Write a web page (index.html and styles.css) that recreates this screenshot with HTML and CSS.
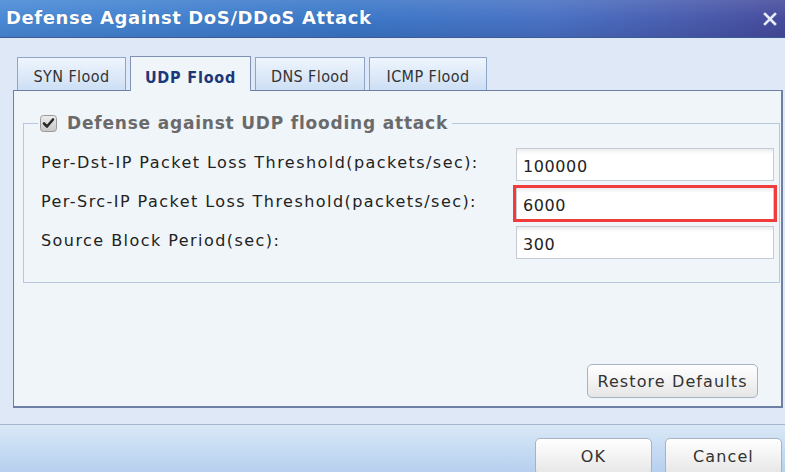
FILE: index.html
```html
<!DOCTYPE html>
<html>
<head>
<meta charset="utf-8">
<link rel="stylesheet" href="styles.css">
</head>
<body>
<div class="dialog">
  <div class="titlebar">
    <span class="title">Defense Against DoS/DDoS Attack</span>
    <svg class="close" width="14" height="14" viewBox="0 0 14 14"><path d="M2 2 L12 12 M12 2 L2 12" stroke="#e8ecf4" stroke-width="2.6" stroke-linecap="square"/></svg>
  </div>
  <div class="content">
    <div class="tabs">
      <div class="tab t-syn">SYN Flood</div>
      <div class="tab active t-udp">UDP Flood</div>
      <div class="tab t-dns">DNS Flood</div>
      <div class="tab t-icmp">ICMP Flood</div>
    </div>
    <div class="panel">
      <fieldset class="group">
        <legend class="legend">
          <svg class="check" width="17" height="17" viewBox="0 0 17 17">
            <defs><linearGradient id="cb" x1="0" y1="0" x2="0" y2="1"><stop offset="0" stop-color="#eeeeee"/><stop offset="1" stop-color="#c6c6c6"/></linearGradient></defs>
            <rect x="0.5" y="0.5" width="16" height="16" rx="3" fill="url(#cb)" stroke="#9a9a9a"/>
            <path d="M4 8.5 L7 11.5 L13 4.5" fill="none" stroke="#2a2a2a" stroke-width="2.6" stroke-linecap="round" stroke-linejoin="round"/>
          </svg>
          <span>Defense against UDP flooding attack</span>
        </legend>
        <div class="rows">
          <label class="lbl">Per-Dst-IP Packet Loss Threshold(packets/sec):</label>
          <div class="field"><input class="inp" type="text" value="100000"></div>
          <label class="lbl">Per-Src-IP Packet Loss Threshold(packets/sec):</label>
          <div class="field highlighted"><input class="inp" type="text" value="6000"></div>
          <label class="lbl">Source Block Period(sec):</label>
          <div class="field"><input class="inp" type="text" value="300"></div>
        </div>
      </fieldset>
      <div class="panel-actions">
        <button class="btn restore">Restore Defaults</button>
      </div>
    </div>
  </div>
  <div class="footer">
    <button class="btn fbtn">OK</button>
    <button class="btn fbtn">Cancel</button>
  </div>
</div>
</body>
</html>
```

FILE: styles.css
```css
* { box-sizing: border-box; }
html, body { margin: 0; padding: 0; }
body {
  width: 785px;
  height: 472px;
  overflow: hidden;
  font-family: "DejaVu Sans", Verdana, sans-serif;
  background: #dfe8f6;
}
.dialog {
  width: 785px;
  height: 472px;
  display: flex;
  flex-direction: column;
  overflow: hidden;
}
.titlebar {
  height: 38px;
  flex: none;
  display: flex;
  align-items: center;
  justify-content: space-between;
  padding: 0 8px 2px 6px;
  background:
    linear-gradient(to bottom, rgba(255,255,255,0.10) 0%, rgba(255,255,255,0) 50%, rgba(0,0,40,0.10) 100%),
    linear-gradient(to right, #4a8ad6 0%, #3c78c8 45%, #4a72c4 70%, #4a5cae 88%, #464c9c 100%);
  border-bottom: 1px solid #3a5a98;
}
.title {
  color: #ffffff;
  font-weight: bold;
  font-size: 18px;
  letter-spacing: 0.6px;
  text-shadow: 0 0 1px rgba(0,0,40,0.3);
}
.close { display: block; margin-top: 2px; }
.content {
  flex: none;
  padding: 18px 2px 0 13px;
  height: 386px;
  display: flex;
  flex-direction: column;
}
.tabs {
  display: flex;
  align-items: flex-end;
  padding-left: 4px;
  height: 34px;
  flex: none;
  position: relative;
  z-index: 1;
}
.tab {
  height: 33px;
  border: 1px solid #8ea4c8;
  border-bottom: none;
  background: linear-gradient(to bottom, #eef5fd 0%, #dbe8f8 60%, #cddff5 100%);
  font-family: "DejaVu Sans Condensed", "DejaVu Sans", sans-serif;
  font-size: 16px;
  letter-spacing: 0.4px;
  color: #333;
  display: flex;
  align-items: center;
  justify-content: center;
  padding-top: 5px;
  margin-right: 4px;
}
.t-syn { width: 109px; }
.t-udp { width: 121px; }
.t-dns { width: 110px; }
.t-icmp { width: 118px; }
.tab.active {
  height: 35px;
  background: #f0f5fa;
  color: #1c3878;
  font-weight: bold;
  letter-spacing: 0.8px;
  border-color: #7f92b6;
  margin-bottom: -1px;
  padding-top: 6px;
}
.panel {
  flex: none;
  height: 318px;
  border: 1px solid #6d80a4;
  border-right-width: 2px;
  border-bottom-width: 2px;
  background: #f0f5fa;
  padding: 22px 1px 8px 9px;
  display: flex;
  flex-direction: column;
  justify-content: space-between;
}
.group {
  margin: 0;
  border: 1px solid #b8c8de;
  padding: 15px 5px 23px 17px;
  min-width: 0;
}
.legend {
  margin-left: -3px;
  padding: 0 4px 0 2px;
  display: flex;
  align-items: center;
  gap: 10px;
  font-weight: bold;
  font-size: 17px;
  color: #6a6a6a;
  letter-spacing: 0.8px;
}
.check { display: block; }
.rows {
  display: grid;
  grid-template-columns: 1fr 258px;
  row-gap: 6px;
  align-items: center;
}
.lbl {
  font-size: 16px;
  color: #222;
  letter-spacing: 1.45px;
  padding-bottom: 5px;
  white-space: nowrap;
}
.field { position: relative; height: 33px; }
.inp {
  width: 258px;
  height: 33px;
  margin: 0;
  border: 1px solid #c6cbd4;
  background: linear-gradient(to bottom, #ececec 0px, #ffffff 5px, #ffffff 100%);
  font-family: "DejaVu Sans", Verdana, sans-serif;
  font-size: 16px;
  letter-spacing: 0.6px;
  color: #222;
  padding: 3px 6px 0 6px;
  outline: none;
}
.highlighted::after {
  content: "";
  position: absolute;
  left: -3px; top: -2px; right: -3px; bottom: -2px;
  border: 3px solid #f03c3c;
  pointer-events: none;
}
.panel-actions {
  display: flex;
  justify-content: flex-end;
  padding-right: 22px;
}
.btn {
  font-family: "DejaVu Sans", Verdana, sans-serif;
  font-size: 16px;
  color: #333;
  border: 1px solid #a9b2bf;
  border-radius: 5px;
  background: linear-gradient(to bottom, #ffffff 0%, #f4f4f4 45%, #e6e6e6 100%);
  letter-spacing: 1.1px;
}
.restore {
  width: 171px;
  height: 34px;
  padding: 0;
}
.footer {
  flex: none;
  height: 48px;
  border-top: 1px solid #a3b4cb;
  background: linear-gradient(to bottom, #dae8f6 0%, #c7dcf3 50%, #b8d0ef 100%);
  display: flex;
  justify-content: flex-end;
  align-items: flex-start;
  padding: 13px 3px 0 0;
  gap: 13px;
}
.fbtn {
  width: 117px;
  height: 37px;
  padding: 0;
  flex: none;
}
```
